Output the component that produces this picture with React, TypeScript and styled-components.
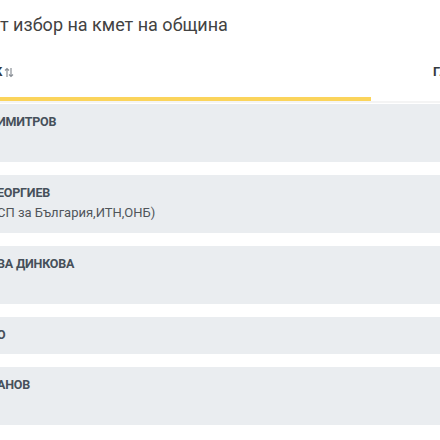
import React from 'react';
import styled, { createGlobalStyle } from 'styled-components';

const GlobalStyle = createGlobalStyle`
  html, body {
    margin: 0;
    padding: 0;
    background: #ffffff;
    overflow: hidden;
  }
  body {
    font-family: Roboto, "Noto Sans", sans-serif;
  }
`;

const Page = styled.main`
  display: flex;
  flex-direction: column;
  width: 440px;
  overflow: hidden;
`;

const Title = styled.h2`
  margin: 0;
  padding-top: 14px;
  font-size: 18px;
  line-height: 22px;
  font-weight: 400;
  color: #424242;
  white-space: nowrap;
`;

const TableHead = styled.div`
  display: grid;
  grid-template-columns: 371px 1fr;
  border-bottom: 2px solid #f4f4f4;
`;

const HeadCell = styled.div<{ $active?: boolean }>`
  display: flex;
  align-items: center;
  gap: 2px;
  padding: 27px 0 ${(p) => (p.$active ? '16px' : '20px')};
  padding-left: ${(p) => (p.$active ? '0' : '62px')};
  border-bottom: ${(p) => (p.$active ? '4px solid #fbd45b' : 'none')};
  font-size: 13px;
  line-height: 18px;
  font-weight: 700;
  color: #333a40;
  white-space: nowrap;
  overflow: hidden;
`;

const HeadLabel = styled.span<{ $shift?: number }>`
  margin-left: ${(p) => p.$shift ?? 0}px;
`;

const SortIcon = styled.svg`
  width: 10px;
  height: 11px;
  color: #8a9097;
`;

const Rows = styled.div`
  display: flex;
  flex-direction: column;
  gap: 13px;
  margin-top: 1px;
`;

const Row = styled.div`
  display: flex;
  flex-direction: column;
  padding: 9px 0 10px;
  background: #eaedf0;
`;

const Name = styled.div`
  margin-left: -3px;
  font-size: 12.5px;
  line-height: 18px;
  font-weight: 700;
  letter-spacing: -0.2px;
  color: #46505a;
  white-space: nowrap;
`;

const Party = styled.div`
  margin-left: -3px;
  min-height: 21px;
  font-size: 13px;
  line-height: 21px;
  color: #50555a;
  white-space: nowrap;
`;

type Candidate = { name: string; party?: string };

const candidates: Candidate[] = [
  { name: 'ИМИТРОВ', party: '' },
  { name: 'ЕОРГИЕВ', party: 'СП за България,ИТН,ОНБ)' },
  { name: 'ВА ДИНКОВА', party: '' },
  { name: 'О' },
  { name: 'АНОВ', party: '' },
];

export default function App() {
  return (
    <Page>
      <GlobalStyle />
      <Title>т избор на кмет на община</Title>
      <TableHead>
        <HeadCell $active>
          <HeadLabel $shift={-6}>К</HeadLabel>
          <SortIcon viewBox="0 0 10 11" fill="none" stroke="currentColor" strokeWidth="1.2">
            <path d="M3 10V1.5M1 3.5l2-2 2 2" />
            <path d="M7 1v8.5M5 7.5l2 2 2-2" />
          </SortIcon>
        </HeadCell>
        <HeadCell>
          <HeadLabel>ГЛАСОВЕ</HeadLabel>
        </HeadCell>
      </TableHead>
      <Rows>
        {candidates.map((c, i) => (
          <Row key={i}>
            <Name>{c.name}</Name>
            {c.party !== undefined && <Party>{c.party}</Party>}
          </Row>
        ))}
      </Rows>
    </Page>
  );
}
